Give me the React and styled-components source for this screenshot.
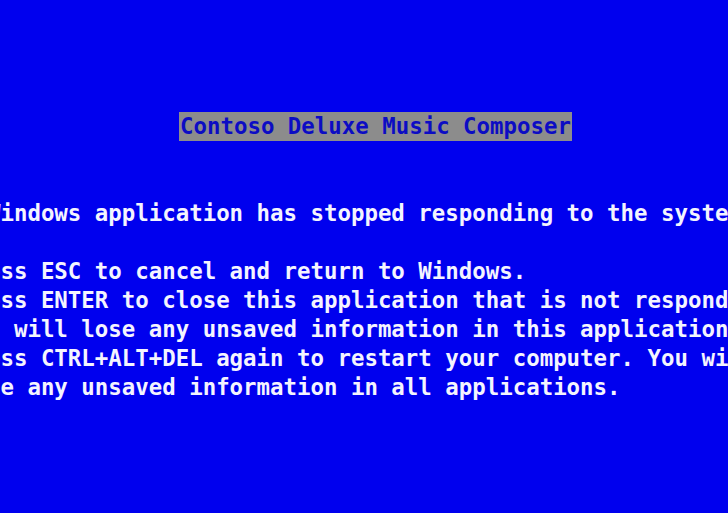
import React from "react";
import styled, { createGlobalStyle } from "styled-components";

const GlobalStyle = createGlobalStyle`
  html, body {
    margin: 0;
    padding: 0;
    background: #0000ee;
    overflow: hidden;
  }
`;

const Screen = styled.div`
  width: 728px;
  height: 513px;
  background: #0000ee;
  overflow: hidden;
  padding-top: 112px;
  box-sizing: border-box;
`;

const Console = styled.div`
  margin-left: -40px;
  width: 831px;
  font-family: "DejaVu Sans Mono", "Liberation Mono", monospace;
  font-weight: bold;
  font-size: 22.4px;
  line-height: 29px;
  color: #f4f4ff;
  white-space: pre;
`;

const TitleRow = styled.div`
  text-align: center;
  margin-bottom: 58px;
`;

const Title = styled.span`
  display: inline-block;
  background: #8c8c8c;
  color: #0c0cc4;
  padding: 0 1px;
`;

const Line = styled.div`
  margin-bottom: ${(p) => (p.$gap ? "29px" : "0")};
`;

const lines = [
  "Press ESC to cancel and return to Windows.",
  "Press ENTER to close this application that is not responding.",
  "You will lose any unsaved information in this application.",
  "Press CTRL+ALT+DEL again to restart your computer. You will",
  "lose any unsaved information in all applications.",
];

export default function App() {
  return (
    <Screen>
      <GlobalStyle />
      <Console>
        <TitleRow>
          <Title>Contoso Deluxe Music Composer</Title>
        </TitleRow>
        <Line $gap>A Windows application has stopped responding to the system.</Line>
        {lines.map((l, i) => (
          <Line key={i}>{l}</Line>
        ))}
      </Console>
    </Screen>
  );
}
